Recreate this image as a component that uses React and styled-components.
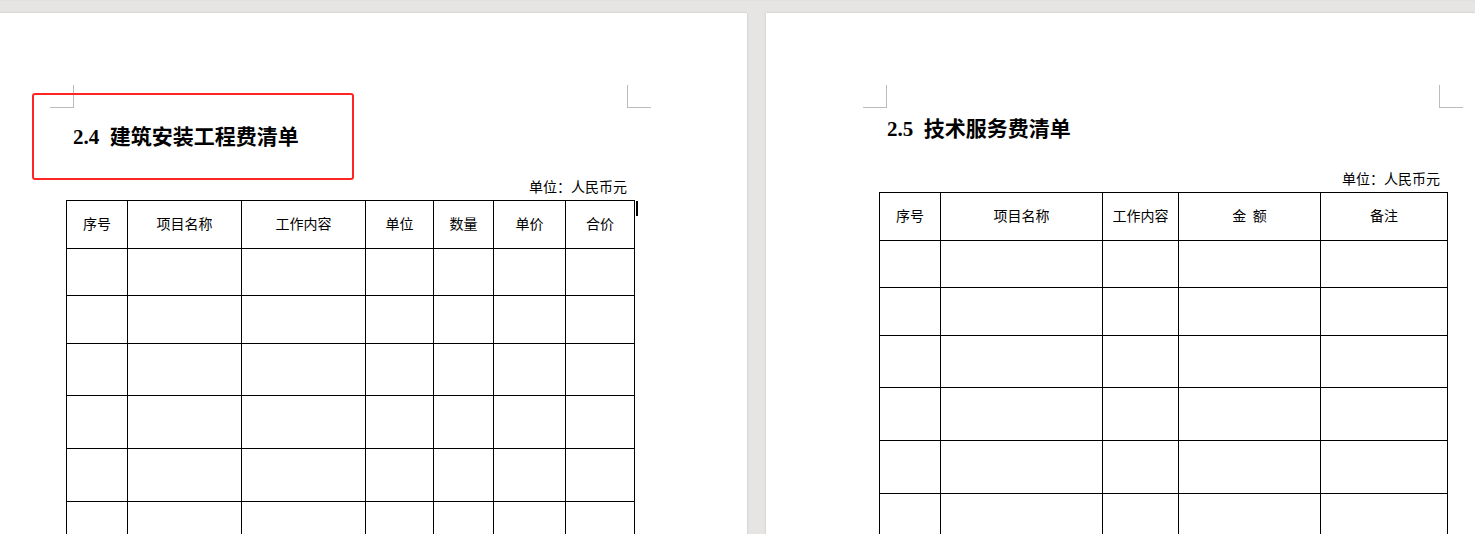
import styled, { createGlobalStyle } from 'styled-components';

const GlobalStyle = createGlobalStyle`
  html, body {
    margin: 0;
    padding: 0;
    overflow: hidden;
    background: #e7e5e3;
  }
`;

const leftSheet = {
  title: '2.4  建筑安装工程费清单',
  columns: [
    { label: '序号', width: 61 },
    { label: '项目名称', width: 114 },
    { label: '工作内容', width: 124 },
    { label: '单位', width: 68 },
    { label: '数量', width: 60 },
    { label: '单价', width: 72 },
    { label: '合价', width: 69 },
  ],
};

const rightSheet = {
  title: '2.5  技术服务费清单',
  columns: [
    { label: '序号', width: 61 },
    { label: '项目名称', width: 162 },
    { label: '工作内容', width: 76 },
    { label: '金  额', width: 142 },
    { label: '备注', width: 127 },
  ],
};

const bodyRows = [47, 48, 52, 53, 53, 53];

const App = () => {
  return (
    <Workspace>
      <GlobalStyle />
      <Page>
        <CropMarks $left={50} $right={96}>
          <Mark $side='left' />
          <Mark $side='right' />
        </CropMarks>
        <Title $indent={73} $gap={14}>{leftSheet.title}</Title>
        <UnitLine $right={120}>单位：人民币元</UnitLine>
        <TableWrap $indent={66}>
          <SheetTable columns={leftSheet.columns} />
          <Caret />
        </TableWrap>
        <Highlight />
      </Page>
      <Page>
        <CropMarks $left={97} $right={50}>
          <Mark $side='left' />
          <Mark $side='right' />
        </CropMarks>
        <Title $indent={121} $gap={6}>{rightSheet.title}</Title>
        <UnitLine $right={73}>单位：人民币元</UnitLine>
        <TableWrap $indent={113}>
          <SheetTable columns={rightSheet.columns} />
        </TableWrap>
      </Page>
    </Workspace>
  );
};

const SheetTable = ({ columns }) => (
  <Table>
    <colgroup>
      {columns.map(col => (
        <col key={col.label} style={{ width: col.width }} />
      ))}
    </colgroup>
    <tbody>
      <Row $height={48}>
        {columns.map(col => (
          <Cell key={col.label} $head>{col.label}</Cell>
        ))}
      </Row>
      {bodyRows.map((h, i) => (
        <Row key={`row_${i}`} $height={h}>
          {columns.map(col => (
            <Cell key={col.label} />
          ))}
        </Row>
      ))}
    </tbody>
  </Table>
);

const Workspace = styled.div`
  display: flex;
  gap: 19px;
  padding-top: 12px;
  overflow: hidden;
  border-top: 1px solid #e2e0de;
  box-sizing: border-box;
  height: 534px;
`;

const Page = styled.section`
  position: relative;
  flex: 0 0 747px;
  height: 700px;
  background: #ffffff;
  box-shadow: 0 0 2px rgba(0, 0, 0, 0.18);
  padding-top: 72px;
  box-sizing: border-box;
`;

const CropMarks = styled.div`
  display: flex;
  justify-content: space-between;
  padding: 0 ${({ $right }) => $right}px 0 ${({ $left }) => $left}px;
`;

const Mark = styled.span`
  width: 24px;
  height: 23px;
  box-sizing: border-box;
  border-bottom: 1px solid #bcbcbc;
  ${({ $side }) =>
    $side === 'left'
      ? 'border-right: 1px solid #bcbcbc;'
      : 'border-left: 1px solid #bcbcbc;'}
`;

const Title = styled.h2`
  margin: ${({ $gap }) => $gap}px 0 0 ${({ $indent }) => $indent}px;
  font-family: 'Liberation Serif', 'Noto Sans CJK SC', serif;
  font-weight: 700;
  font-size: 21px;
  line-height: 30px;
  color: #000;
  white-space: pre;
`;

const UnitLine = styled.p`
  margin: 24px ${({ $right }) => $right}px 4px 0;
  text-align: right;
  font-family: 'Noto Sans CJK SC', sans-serif;
  font-size: 14px;
  line-height: 20px;
  color: #000;
`;

const TableWrap = styled.div`
  position: relative;
  margin-left: ${({ $indent }) => $indent}px;
  width: max-content;
`;

const Table = styled.table`
  border-collapse: collapse;
  table-layout: fixed;
  font-family: 'Noto Sans CJK SC', sans-serif;
  font-size: 14px;
  color: #000;
`;

const Row = styled.tr`
  height: ${({ $height }) => $height}px;
`;

const Cell = styled.td`
  border: 1px solid #000;
  padding: 0 0 ${({ $head }) => ($head ? '4px' : '0')};
  text-align: center;
  vertical-align: middle;
  white-space: pre;
`;

const Caret = styled.span`
  position: absolute;
  top: 1px;
  right: -3px;
  width: 2px;
  height: 15px;
  background: #000;
`;

const Highlight = styled.div`
  position: absolute;
  left: 32px;
  top: 80px;
  width: 322px;
  height: 87px;
  box-sizing: border-box;
  border: 2.5px solid #ff2525;
  border-radius: 3px;
  pointer-events: none;
`;

export default App;
